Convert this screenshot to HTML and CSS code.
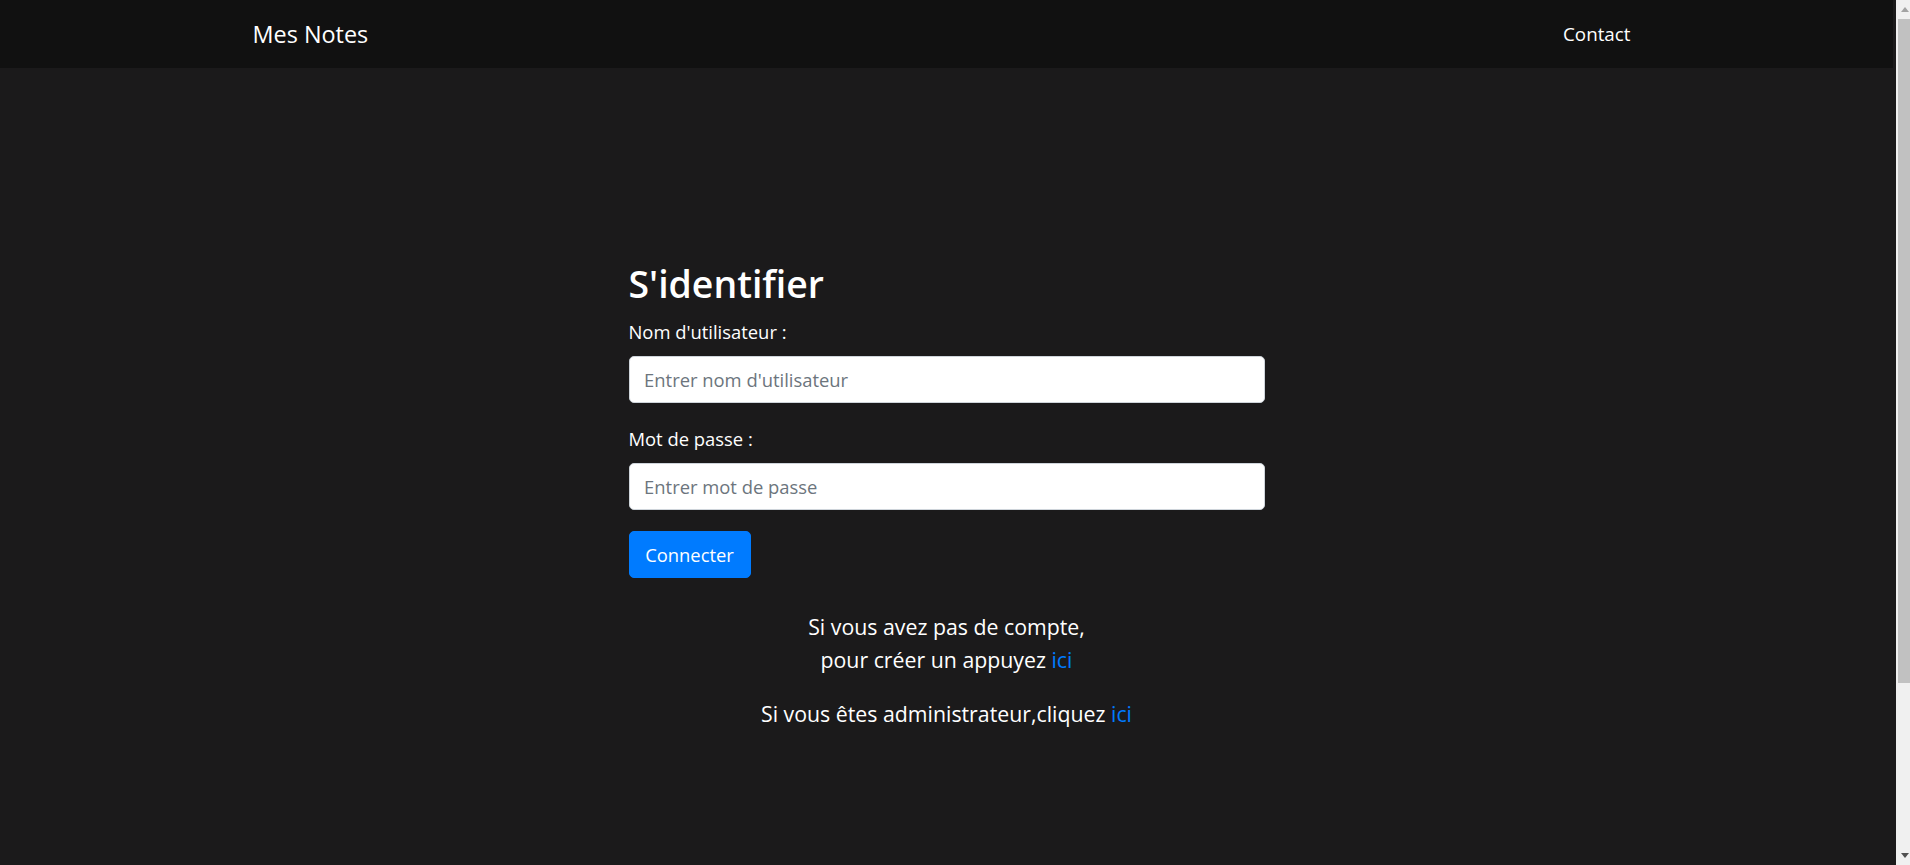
FILE: index.html
```html
<!DOCTYPE html>
<html lang="fr">
<head>
<meta charset="utf-8">
<title>Mes Notes - S'identifier</title>
<link rel="stylesheet" href="styles.css">
</head>
<body>
<div class="page">
  <nav class="navbar">
    <div class="container nav-inner">
      <a class="brand" href="#">Mes Notes</a>
      <a class="nav-link" href="#">Contact</a>
    </div>
  </nav>
  <main class="main">
    <form class="login">
      <h2 class="title">S'identifier</h2>
      <div class="form-group">
        <label class="label" for="user">Nom d'utilisateur :</label>
        <input class="input" id="user" type="text" placeholder="Entrer nom d'utilisateur">
      </div>
      <div class="form-group">
        <label class="label" for="pass">Mot de passe :</label>
        <input class="input" id="pass" type="password" placeholder="Entrer mot de passe">
      </div>
      <button class="btn" type="button">Connecter</button>
    </form>
    <div class="info">
      <p class="info-line">Si vous avez pas de compte,<br>pour créer un appuyez <a class="link" href="#">ici</a></p>
      <p class="info-line">Si vous êtes administrateur,cliquez <a class="link" href="#">ici</a></p>
    </div>
  </main>
</div>
<div class="scrollbar">
  <div class="sb-btn"><span class="arrow-up"></span></div>
  <div class="sb-thumb"></div>
  <div class="sb-track"></div>
  <div class="sb-btn"><span class="arrow-down"></span></div>
</div>
</body>
</html>
```
FILE: styles.css
```css
html {
  overflow: hidden;
}
body {
  margin: 0;
  width: 1913px;
  height: 865px;
  display: flex;
  background: #1b1a1b;
  font-family: "Open Sans", "Noto Sans", sans-serif;
  color: #fff;
}
.page {
  width: 1896px;
  padding-right: 3px;
  box-sizing: border-box;
  flex: none;
}
.navbar {
  height: 68px;
  background: #111111;
}
.container {
  width: 1388px;
  margin: 0 auto;
}
.nav-inner {
  height: 100%;
  display: flex;
  align-items: center;
  justify-content: space-between;
}
.brand {
  color: #fff;
  text-decoration: none;
  font-size: 23.4px;
  line-height: 36px;
}
.nav-link {
  color: #fff;
  text-decoration: none;
  font-size: 18.8px;
  line-height: 29px;
  padding: 0 10px;
}
.main {
  padding-top: 192px;
}
.login {
  width: 636px;
  margin: 0 auto;
}
.title {
  margin: 0 0 10px;
  font-size: 37.4px;
  line-height: 47px;
  font-weight: 600;
}
.form-group {
  margin-bottom: 21px;
}
.label {
  display: block;
  font-size: 18.4px;
  line-height: 29px;
  margin-bottom: 10px;
}
.input {
  display: block;
  box-sizing: border-box;
  width: 100%;
  height: 47px;
  padding: 7px 14.6px;
  border: 1px solid #ced4da;
  border-radius: 5px;
  background: #fff;
  font-family: inherit;
  font-size: 18.4px;
  color: #495057;
  outline: none;
}
.input::placeholder {
  color: #6c757d;
}
.btn {
  display: block;
  box-sizing: border-box;
  height: 47px;
  width: 122px;
  padding: 0;
  border: 1px solid #007bff;
  border-radius: 5px;
  background: #007bff;
  color: #fff;
  font-family: inherit;
  font-size: 18.4px;
}
.info {
  margin-top: 32px;
  text-align: center;
}
.info-line {
  margin: 0 0 21px;
  font-size: 21.3px;
  line-height: 33px;
}
.link {
  color: #007bff;
  text-decoration: none;
}
.scrollbar {
  width: 17px;
  flex: none;
  background: #f0f0f0;
  display: flex;
  flex-direction: column;
}
.sb-btn {
  height: 19px;
  display: flex;
  align-items: center;
  justify-content: center;
}
.arrow-up {
  width: 0;
  height: 0;
  border-left: 4.5px solid transparent;
  border-right: 4.5px solid transparent;
  border-bottom: 5px solid #a3a3a3;
}
.arrow-down {
  width: 0;
  height: 0;
  border-left: 4.5px solid transparent;
  border-right: 4.5px solid transparent;
  border-top: 5px solid #505050;
}
.sb-thumb {
  height: 664px;
  margin: 0 2px;
  background: #c1c1c1;
}
.sb-track {
  flex: 1;
}
```
